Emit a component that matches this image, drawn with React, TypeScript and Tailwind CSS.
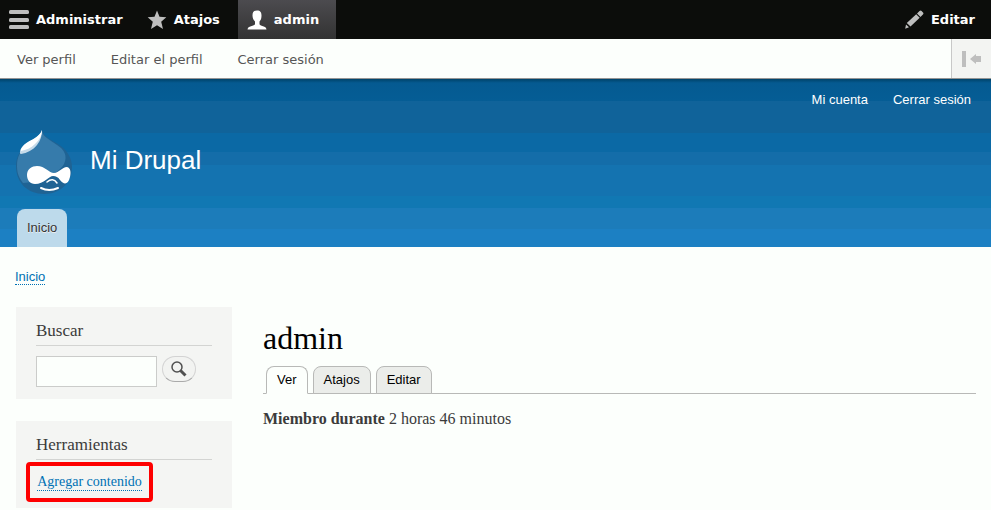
import React from "react";

function DrupalLogo() {
  return (
    <svg width="58" height="66" viewBox="0 0 58 66" aria-hidden="true">
      <path d="M27 0C26 6 20 10 12 15C5 20 1 27 1 36C1 53 13 64 29 64C45 64 57 53 57 37C57 27 51 19 43 14C35 9 29 7 27 0Z" fill="#1f6394" />
      <path d="M27 1C26 7 20 11 12 16C5 21 2 27 2 36C2 43 4 48 8 53C22 52 42 46 49 34C53 26 49 19 42 15C34 9 28 7 27 1Z" fill="#367bab" />
      <path d="M27 0C27 5 26 10 22 15C18 20 12 23 6 24C4 24 5 19 8 16C12 12 25 8 27 0Z" fill="#c6dbea" />
      <path d="M27 0C27 5 25 9 20 14C16 18 11 20 6 21C5 20 7 17 10 14C15 10 25 7 27 0Z" fill="#fff" />
      <path d="M12 45C12 39 17 36 22 36C30 36 34 43 39 43C44 43 47 37 52 37C56 38 56 43 55 47C53 55 49 55 45 50C43 47 41 46 38 46C34 46 29 54 20 54C15 54 12 50 12 45Z" fill="#fff" />
      <path d="M32 52Q38 47 42 53" fill="none" stroke="#fff" strokeWidth="1.5" strokeLinecap="round" />
      <path d="M26 58Q34 62 43 58" fill="none" stroke="#fff" strokeWidth="2" strokeLinecap="round" />
    </svg>
  );
}

function MenuIcon() {
  return (
    <svg width="20" height="20" viewBox="0 0 20 20" fill="#bebebe" aria-hidden="true">
      <rect y="0" width="20" height="4" rx="1.5" />
      <rect y="8" width="20" height="4" rx="1.5" />
      <rect y="15" width="20" height="4" rx="1.5" />
    </svg>
  );
}

function StarIcon() {
  return (
    <svg width="20" height="20" viewBox="0 0 20 20" fill="#bebebe" aria-hidden="true">
      <path d="M10 .5L12.5 6.8L19.3 7.3L14.2 11.7L16 19L10 15.2L4 19L5.800 11.700L.7 7.300L7.500 6.800Z" />
    </svg>
  );
}

function PersonIcon() {
  return (
    <svg width="20" height="20" viewBox="0 0 20 20" fill="#fff" aria-hidden="true">
      <path d="M10 .5C6.500.5 5.500 2.500 5.500 5.500C5.500 8 6.500 10 8 11.500V14C8 15 6 15.500 4 16.200C2 16.800.8 17.500.5 19.500H19.500C19.200 17.500 18 16.800 16 16.200C14 15.500 12.500 15 12.500 14V11.500C14 10 14.500 8 14.500 5.500C14.500 2.500 13.500.5 10 .5Z" />
    </svg>
  );
}

function PencilIcon() {
  return (
    <svg width="20" height="20" viewBox="0 0 20 20" fill="#bebebe" aria-hidden="true">
      <path d="M13 3.500L15.500 1C16.300.3 17 .3 17.600 1L19 2.500C19.600 3.100 19.600 3.800 18.900 4.500L16.500 6.900ZM12.200 4.300L15.700 7.700L6.500 16.500L2.800 13ZM2 14.400L5 17.300L1.200 18.800Z" />
    </svg>
  );
}

const trayLinks = ["Ver perfil", "Editar el perfil", "Cerrar sesión"];

function Toolbar() {
  return (
    <nav aria-label="Administración" className="font-['DejaVu_Sans',sans-serif] text-[13px]">
      <div className="flex h-[39px] justify-between bg-[#0c0d0b] font-bold text-white">
        <div className="flex">
          <a href="#administrar" className="flex items-center gap-[7px] pr-3 pl-[9px]"><MenuIcon />Administrar</a>
          <a href="#atajos" className="flex items-center gap-[7px] pr-[18px] pl-3"><StarIcon />Atajos</a>
          <a href="#admin" className="flex w-[98px] items-center gap-[7px] bg-linear-to-b from-[#4c4b4f] to-[#333] pl-[9px]"><PersonIcon />admin</a>
        </div>
        <button type="button" className="flex items-center gap-[7px] pr-4"><PencilIcon />Editar</button>
      </div>
      <div className="flex h-[40px] border-b border-[#949494] bg-[#fcfffc] text-[#565656]">
        <ul className="flex grow items-center gap-[35px] pt-[2px] pl-[17px]">
          {trayLinks.map((t) => <li key={t}><a href="#perfil">{t}</a></li>)}
        </ul>
        <button type="button" aria-label="Orientación vertical" className="flex w-10 items-center border-l border-[#c8c8c8] bg-[#f3f4f2] pl-[10px]">
          <svg width="20" height="16" viewBox="0 0 20 16" fill="#bebebe" aria-hidden="true">
            <path d="M0 0H4V16H0ZM8 8L14 3V5H19V11H14V13Z" />
          </svg>
        </button>
      </div>
    </nav>
  );
}

function SiteHeader() {
  return (
    <header className="bg-[linear-gradient(to_bottom,#004369_0px,#055a91_4px,#055d95_22px,#10639a_22px,#10639a_54px,#0b69a5_54px,#0b69a5_73px,#146da9_73px,#146da9_86px,#1473b0_86px,#1473b0_117px,#1178b3_117px,#1178b3_129px,#1c7cba_129px,#1c7cba_150px,#1c80c3_150px)] text-white">
      <nav aria-label="Cuenta" className="flex h-[42px] items-center justify-end gap-[25px] pr-5">
        <a href="#cuenta">Mi cuenta</a>
        <a href="#salir">Cerrar sesión</a>
      </nav>
      <div className="flex h-[88px] gap-[17px] pt-[9px] pl-[15px]">
        <DrupalLogo />
        <a href="#inicio" className="mt-[10px] h-[40px] text-[26px] leading-[40px]">Mi Drupal</a>
      </div>
      <div className="flex pl-[17px]">
        <a href="#inicio" className="h-[38px] rounded-t-lg bg-[#bddaeb] px-[10px] leading-[38px] text-[#333] [text-shadow:0_1px_#eee]">Inicio</a>
      </div>
    </header>
  );
}

const serif = "font-['Liberation_Serif',serif]";
const dotted = "border-b border-dotted border-[#0071b3] text-[#0071b3]";

function Block({ title, children }: { title: string; children: React.ReactNode }) {
  return (
    <section className="bg-[#f4f5f3] px-5 pt-3">
      <h2 className="h-[27px] border-b border-[#d3d4d2] text-[17px] leading-[24px]">{title}</h2>
      {children}
    </section>
  );
}

function Tabs() {
  const tab = "h-[28px] rounded-t-lg border px-[10px] leading-[26px] text-black";
  return (
    <nav aria-label="Pestañas" className="flex h-[28px] gap-[5px] border-b border-[#b8b9b7] pl-[3px] font-['Liberation_Sans',sans-serif] text-[13px]">
      <a href="#ver" aria-current="page" className={tab + " border-[#b8b9b7] border-b-[#fcfffc] bg-[#fcfffc]"}>Ver</a>
      <a href="#atajos" className={tab + " border-[#b8b9b7] bg-[#ebedea]"}>Atajos</a>
      <a href="#editar" className={tab + " border-[#b8b9b7] bg-[#ebedea]"}>Editar</a>
    </nav>
  );
}

export default function App() {
  return (
    <div className="min-h-screen bg-[#fcfffc] font-['Liberation_Sans',sans-serif] text-[13px] text-[#3b3b3b]">
      <Toolbar />
      <SiteHeader />
      <nav aria-label="Ruta" className="flex h-[60px] items-start px-[15px] pt-[22px]">
        <a href="#inicio" className={dotted + " leading-[15px]"}>Inicio</a>
      </nav>
      <div className={"flex items-start gap-[31px] px-4 pr-[15px] " + serif}>
        <aside className="flex w-[216px] shrink-0 flex-col gap-[22px]">
          <Block title="Buscar">
            <form className="flex h-[53px] items-start gap-[5px] pt-[10px]" onSubmit={(e) => e.preventDefault()}>
              <input type="search" aria-label="Buscar" className="h-[31px] w-[121px] border border-[#cbccca] bg-[#fcfffc] px-2" />
              <button type="submit" aria-label="Buscar" className="flex h-[26px] w-[34px] items-center justify-center rounded-full border border-[#d3d3d3] border-b-[#aaa] bg-[#f2f3f1]">
                <svg width="16" height="16" viewBox="0 0 16 16" fill="none" aria-hidden="true">
                  <circle cx="6" cy="6" r="5" stroke="#505050" strokeWidth="1.500" />
                  <path d="M9.500 9.500L14.500 14.500" stroke="#505050" strokeWidth="3" />
                </svg>
              </button>
            </form>
          </Block>
          <Block title="Herramientas">
            <div className="-mx-[10px] pt-[2px] pb-[6px]">
              <div className="flex h-[40px] w-[127px] items-center justify-center rounded-sm border-4 border-[#fe0000]">
                <a href="#agregar" className={dotted + " whitespace-nowrap text-[14px] leading-[16px]"}>Agregar contenido</a>
              </div>
            </div>
          </Block>
        </aside>
        <main className="min-w-0 grow pt-[13px]">
          <h1 className="h-[46px] text-[32px] leading-[36px] text-black">admin</h1>
          <Tabs />
          <p className="pt-[15px] text-[16px] leading-[20px]"><strong>Miembro durante</strong> 2 horas 46 minutos</p>
        </main>
      </div>
    </div>
  );
}
